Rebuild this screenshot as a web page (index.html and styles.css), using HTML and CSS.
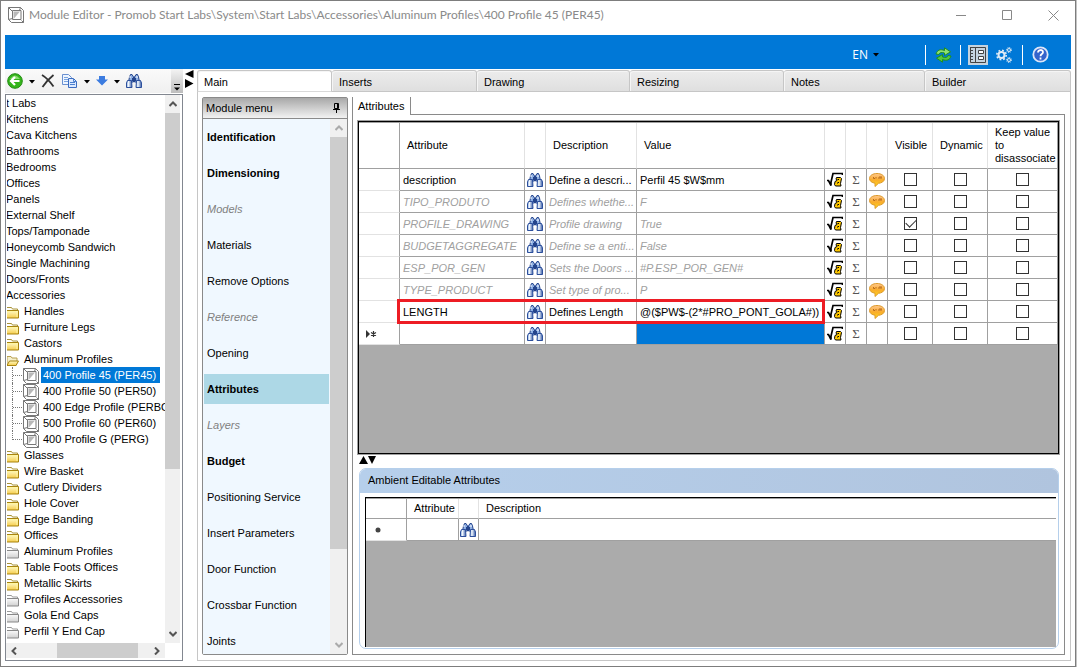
FILE: index.html
```html
<!DOCTYPE html>
<html lang="en">
<head>
    <meta charset="utf-8">
    <title>Module Editor</title>
    <link rel="stylesheet" href="styles.css">
</head>
<body>
    <!-- icon set -->
    <svg class="icon-defs" width="0" height="0" aria-hidden="true">
        <defs>
            <linearGradient id="gBlue" x1="0" x2="1"><stop offset="0" stop-color="#7fa4dc"/><stop offset=".35" stop-color="#f4faff"/><stop offset="1" stop-color="#3458a4"/></linearGradient>
            <linearGradient id="gFolder" x1="0" y1="0" x2="0" y2="1"><stop offset="0" stop-color="#fffbc8"/><stop offset="1" stop-color="#f6cd4c"/></linearGradient>
            <linearGradient id="gGrey" x1="0" y1="0" x2="0" y2="1"><stop offset="0" stop-color="#fafafa"/><stop offset="1" stop-color="#d0d0d0"/></linearGradient>
            <linearGradient id="gBubble" x1="0" y1="0" x2="0" y2="1"><stop offset="0" stop-color="#ffc890"/><stop offset=".5" stop-color="#f9ac2c"/><stop offset="1" stop-color="#ffd81c"/></linearGradient>
            <symbol id="binoculars" viewBox="0 0 16 14">
                <path d="M3.500 3 4.500.500H6L7.500 3v5H2.500z" fill="#8fb0e4" stroke="#24448c"/>
                <path d="M8.500 3 10 .500h1.500l1 2.500 1 5h-5z" fill="#8fb0e4" stroke="#24448c"/>
                <path d="M6 4h4v3H6z" fill="#24448c"/>
                <path d="M1.500 6.500h4l.500 7H.5V9z" fill="url(#gBlue)" stroke="#2c4f9c"/>
                <path d="M10.500 6.500h4l1 2.500v4.500h-5.500z" fill="url(#gBlue)" stroke="#2c4f9c"/>
                <path d="M4 2v2M11 2v2" stroke="#fff"/>
            </symbol>
            <symbol id="formula" viewBox="0 0 16 15">
                <path d="M0 8.500h1.500L4 13.500V10L6 1.500h9.500V3" fill="none" stroke="#000" stroke-width="1.700"/>
                <path d="M9.500 5.500h4l1 1-1 5 .500 2.500H8.500L7.500 12.500l.500-3 2-1L9 7z" fill="#ffc800" stroke="#000"/>
                <path d="M10.500 7.500h1.500M10 11h1l1-1" fill="none" stroke="#000"/>
            </symbol>
            <symbol id="bubble" viewBox="0 0 16 14">
                <path d="M8 .5c4.200 0 7.500 2 7.500 5S12.500 10 9.500 10.300L6 13.500v-3.300C3 9.800.5 8.200.5 5.500c0-3 3.300-5 7.500-5z" fill="url(#gBubble)" stroke="#dc9a2c"/>
                <path d="M4.500 4v1.500H6M7 4v1.500M9 5h4M10 4h3" stroke="#b86a1c" fill="none"/>
            </symbol>
            <symbol id="folder" viewBox="0 0 12 12">
                <path d="M0 .5h4.500l1 1.500h5v2" fill="#fffde0" stroke="#a8923c"/>
                <path d="M0 3.500h11.500v7.500H0" fill="url(#gFolder)" stroke="#a88410"/>
                <path d="M10 4.500v5.500M0 4.500h9" stroke="#fff6a0"/>
            </symbol>
            <symbol id="folder-grey" viewBox="0 0 12 12">
                <path d="M0 .5h4.500l1 1.500h5v2" fill="#fff" stroke="#999"/>
                <path d="M0 3.500h11.500v7.500H0" fill="url(#gGrey)" stroke="#888"/>
            </symbol>
            <symbol id="folder-open" viewBox="0 0 12 12">
                <path d="M0 1.500h4l1 1.500h5v3L9 10.500H0z" fill="#f5efcc" stroke="#b8a050"/>
                <path d="M0 10.500 2.500 6H11.500L9 10.500z" fill="url(#gFolder)" stroke="#a88410"/>
            </symbol>
            <symbol id="module" viewBox="0 0 16 16">
                <path d="M.5.5h12l3 3v12h-12l-3-3zM.5.5l4 4M12.500.5l-1 3M.5 12.500l4-1M15.500 15.500l-2-2" fill="#fff" stroke="#777"/>
                <path d="M4.500 3.500h8.500v9H4.500z" fill="#fff" stroke="#777"/>
                <path d="M5.500 4.500h6.500L5.500 12z" fill="#b8b8b8"/>
            </symbol>
            <symbol id="caret" viewBox="0 0 6 4"><path d="M0 0h6L3 3.500z"/></symbol>
            <symbol id="chevron" viewBox="0 0 8 8"><path d="M.5 6 4 2.500 7.500 6" fill="none" stroke="currentColor" stroke-width="2"/></symbol>
        </defs>
    </svg>

    <div class="window">
        <header class="titlebar">
            <svg class="app-icon" width="16" height="16"><use href="#module"/></svg>
            <span class="title">Module Editor - Promob Start Labs\System\Start Labs\Accessories\Aluminum Profiles\400 Profile 45 (PER45)</span>
            <button class="win-btn" aria-label="Minimize"><svg width="11" height="11"><path d="M0 5.500h10" stroke="#888"/></svg></button>
            <button class="win-btn" aria-label="Maximize"><svg width="11" height="11"><path d="M.5.500h9v9h-9z" fill="none" stroke="#888"/></svg></button>
            <button class="win-btn" aria-label="Close"><svg width="11" height="11"><path d="M.5.500l10 10M10.500.5l-10 10" stroke="#888"/></svg></button>
        </header>

        <div class="ribbon">
            <button class="lang">EN <svg width="6" height="4"><use href="#caret"/></svg></button>
            <span class="divider"></span>
            <button aria-label="Refresh"><svg width="17" height="16" viewBox="0 0 16 16"><path d="M.5 7C1.500 3 5 1.800 9 3.500V.8l6 4-6 3.700V6C6 5 4 5.500 3.500 7.500z" fill="#8fe070" stroke="#209020"/><path d="M15.500 9c-1 4-4.500 5.200-8.500 3.500v2.700l-6-4 6-3.700V10c3 1 5 .5 5.500-1.500z" fill="#54c83c" stroke="#209020"/></svg></button>
            <span class="divider"></span>
            <button class="pressed" aria-label="Properties"><svg width="16" height="16" viewBox="0 0 16 16"><path d="M0 .5h15.500v15H.5V.5M5.500.5v15M1 3.500h2M1 6.500h2M1 9.500h2M1 12.500h2" fill="none" stroke="#444"/><path d="M8.500 3.500h5v3h-5zM8.500 9.500h5v3h-5z" fill="#fff" stroke="#444"/></svg></button>
            <button aria-label="Settings"><svg width="16" height="16" viewBox="0 0 16 16" fill="none" stroke="#e0ebf5"><circle cx="5.500" cy="8" r="3" stroke-width="2"/><circle cx="5.500" cy="8" r="4.700" stroke-width="1.600" stroke-dasharray="1.800 1.890"/><circle cx="13" cy="3" r="1.500"/><circle cx="13" cy="3" r="2.500" stroke-dasharray="1 .96"/><circle cx="13" cy="13" r="1.500"/><circle cx="13" cy="13" r="2.500" stroke-dasharray="1 .96"/></svg></button>
            <span class="divider"></span>
            <button aria-label="Help"><svg width="17" height="17" viewBox="0 0 17 17"><circle cx="8.500" cy="8.500" r="7.200" fill="#3564cc" stroke="#dce6f8" stroke-width="1.800"/><path d="M6 6.500c0-3.300 5-3.200 5-.3 0 2-2.500 1.800-2.500 4M8.500 11.500v2" fill="none" stroke="#fff" stroke-width="1.800"/></svg></button>
        </div>

        <div class="workspace">
            <aside class="sidebar">
                <div class="toolbar">
                    <button aria-label="Back"><svg width="16" height="16" viewBox="0 0 16 16"><circle cx="8" cy="8" r="7.300" fill="#35b51c" stroke="#228c10"/><path d="M3 6Q8-1 13 6z" fill="#8cdc70"/><path d="M12.500 8H4.500M8 4 4 8l4 4" fill="none" stroke="#fff" stroke-width="2.200"/></svg></button>
                    <svg class="drop" width="6" height="4"><use href="#caret"/></svg>
                    <button aria-label="Delete"><svg width="14" height="14" viewBox="0 0 14 14"><path d="M1 1c5 3 8 6.500 11.500 11.500M12.500 1C8 4.500 5 8 1.500 13" fill="none" stroke="#333" stroke-width="1.800"/></svg></button>
                    <button aria-label="Copy"><svg width="16" height="14" viewBox="0 0 16 14"><path d="M.5.500h6l3 3v7h-9z" fill="#eef5ff" stroke="#6a90d0"/><path d="M2 3.500h4M2 5.500h4M2 7.500h4" stroke="#7aa4e0"/><path d="M6.500 4.500h5l3 3v6h-8z" fill="#dceaff" stroke="#3c6cc0"/><path d="M8 8.500h5M8 10.500h5M11.500 5v2.500h3" fill="none" stroke="#4c80d0"/></svg></button>
                    <svg class="drop" width="6" height="4"><use href="#caret"/></svg>
                    <button aria-label="Move down"><svg width="12" height="10" viewBox="0 0 12 10"><path d="M3 0h6v3.500h3L6 9.500 0 3.500h3z" fill="#3c7ce0"/></svg></button>
                    <svg class="drop" width="6" height="4"><use href="#caret"/></svg>
                    <button aria-label="Find"><svg width="16" height="14"><use href="#binoculars"/></svg></button>
                    <span class="overflow"><svg width="6" height="8"><path d="M0 .500h6" stroke="#000"/><path d="M0 3.500h6l-3 3z"/></svg></span>
                </div>
                <div class="tree">
                    <ul class="tree-list">
                        <li class="root">t Labs</li>
                        <li class="root">Kitchens</li>
                        <li class="root">Cava Kitchens</li>
                        <li class="root">Bathrooms</li>
                        <li class="root">Bedrooms</li>
                        <li class="root">Offices</li>
                        <li class="root">Panels</li>
                        <li class="root">External Shelf</li>
                        <li class="root">Tops/Tamponade</li>
                        <li class="root">Honeycomb Sandwich</li>
                        <li class="root">Single Machining</li>
                        <li class="root">Doors/Fronts</li>
                        <li class="root">Accessories</li>
                        <li><svg width="12" height="12"><use href="#folder"/></svg>Handles</li>
                        <li><svg width="12" height="12"><use href="#folder"/></svg>Furniture Legs</li>
                        <li><svg width="12" height="12"><use href="#folder"/></svg>Castors</li>
                        <li><svg width="12" height="12"><use href="#folder-open"/></svg>Aluminum Profiles</li>
                        <li class="leaf"><svg width="16" height="16"><use href="#module"/></svg><span class="selected">400 Profile 45 (PER45)</span></li>
                        <li class="leaf"><svg width="16" height="16"><use href="#module"/></svg><span>400 Profile 50 (PER50)</span></li>
                        <li class="leaf"><svg width="16" height="16"><use href="#module"/></svg><span>400 Edge Profile (PERBO</span></li>
                        <li class="leaf"><svg width="16" height="16"><use href="#module"/></svg><span>500 Profile 60 (PER60)</span></li>
                        <li class="leaf last"><svg width="16" height="16"><use href="#module"/></svg><span>400 Profile G (PERG)</span></li>
                        <li><svg width="12" height="12"><use href="#folder"/></svg>Glasses</li>
                        <li><svg width="12" height="12"><use href="#folder"/></svg>Wire Basket</li>
                        <li><svg width="12" height="12"><use href="#folder"/></svg>Cutlery Dividers</li>
                        <li><svg width="12" height="12"><use href="#folder"/></svg>Hole Cover</li>
                        <li><svg width="12" height="12"><use href="#folder"/></svg>Edge Banding</li>
                        <li><svg width="12" height="12"><use href="#folder"/></svg>Offices</li>
                        <li><svg width="12" height="12"><use href="#folder-grey"/></svg>Aluminum Profiles</li>
                        <li><svg width="12" height="12"><use href="#folder"/></svg>Table Foots Offices</li>
                        <li><svg width="12" height="12"><use href="#folder"/></svg>Metallic Skirts</li>
                        <li><svg width="12" height="12"><use href="#folder-grey"/></svg>Profiles Accessories</li>
                        <li><svg width="12" height="12"><use href="#folder-grey"/></svg>Gola End Caps</li>
                        <li><svg width="12" height="12"><use href="#folder-grey"/></svg>Perfil Y End Cap</li>
                    </ul>
                    <div class="scroll-v tree-v">
                        <svg class="up" width="8" height="8"><use href="#chevron"/></svg>
                        <span class="thumb"></span>
                        <svg class="down" width="8" height="8"><use href="#chevron"/></svg>
                    </div>
                    <div class="scroll-h">
                        <svg class="left" width="8" height="8"><use href="#chevron"/></svg>
                        <span class="thumb"></span>
                        <svg class="right" width="8" height="8"><use href="#chevron"/></svg>
                    </div>
                </div>
            </aside>

            <div class="splitter-v">
                <svg width="9" height="18"><path d="M8.500 0v8L0 4zM0 9v9l8.500-4.500z"/></svg>
            </div>

            <main class="editor">
                <nav class="tabs">
                    <a href="#main" class="tab tab-main active">Main</a>
                    <a href="#inserts" class="tab tab-inserts">Inserts</a>
                    <a href="#drawing" class="tab tab-drawing">Drawing</a>
                    <a href="#resizing" class="tab tab-resizing">Resizing</a>
                    <a href="#notes" class="tab tab-notes">Notes</a>
                    <a href="#builder" class="tab tab-builder">Builder</a>
                </nav>
                <div class="tab-body">
                    <section class="module-menu">
                        <h2>Module menu <svg width="9" height="12"><path d="M2.500 1.500h4v5h-4zM1 7.500h7M4.500 8v3M5.500 1.500v5" fill="none" stroke="#000"/></svg></h2>
                        <div class="menu-body">
                            <ul class="menu-list">
                                <li><a href="#" class="strong">Identification</a></li>
                                <li><a href="#" class="strong">Dimensioning</a></li>
                                <li><a href="#" class="muted">Models</a></li>
                                <li><a href="#">Materials</a></li>
                                <li><a href="#">Remove Options</a></li>
                                <li><a href="#" class="muted">Reference</a></li>
                                <li><a href="#">Opening</a></li>
                                <li><a href="#" class="strong current">Attributes</a></li>
                                <li><a href="#" class="muted">Layers</a></li>
                                <li><a href="#" class="strong">Budget</a></li>
                                <li><a href="#">Positioning Service</a></li>
                                <li><a href="#">Insert Parameters</a></li>
                                <li><a href="#">Door Function</a></li>
                                <li><a href="#">Crossbar Function</a></li>
                                <li><a href="#">Joints</a></li>
                            </ul>
                            <div class="scroll-v menu-v">
                                <svg class="up" width="8" height="8"><use href="#chevron"/></svg>
                                <span class="thumb"></span>
                                <svg class="down" width="8" height="8"><use href="#chevron"/></svg>
                            </div>
                        </div>
                    </section>

                    <section class="attributes">
                        <div class="sub-tabs"><a href="#attributes">Attributes</a></div>
                        <div class="panel">
                            <div class="grid-box">
                                <table class="grid">
                                    <colgroup>
                                        <col class="c-head"><col class="c-attr"><col class="c-icon"><col class="c-desc"><col>
                                        <col class="c-icon"><col class="c-icon"><col class="c-icon"><col class="c-vis"><col class="c-dyn"><col class="c-keep">
                                    </colgroup>
                                    <thead>
                                        <tr><th></th><th>Attribute</th><th></th><th>Description</th><th>Value</th><th></th><th></th><th></th><th>Visible</th><th>Dynamic</th><th>Keep value to disassociate</th></tr>
                                    </thead>
                                    <tbody>
                                        <tr>
                                            <td></td><td>description</td>
                                            <td class="icon"><button aria-label="Find"><svg width="16" height="14"><use href="#binoculars"/></svg></button></td>
                                            <td>Define a descri...</td><td>Perfil 45 $W$mm</td>
                                            <td class="icon"><button aria-label="Formula"><svg width="16" height="15"><use href="#formula"/></svg></button></td>
                                            <td class="sigma"><button>Σ</button></td>
                                            <td class="icon"><button aria-label="Comment"><svg width="16" height="14"><use href="#bubble"/></svg></button></td>
                                            <td class="check"><input type="checkbox" aria-label="Visible"></td>
                                            <td class="check"><input type="checkbox" aria-label="Dynamic"></td>
                                            <td class="check"><input type="checkbox" aria-label="Keep value to disassociate"></td>
                                        </tr>
                                        <tr class="inherited">
                                            <td></td><td>TIPO_PRODUTO</td>
                                            <td class="icon"><button aria-label="Find"><svg width="16" height="14"><use href="#binoculars"/></svg></button></td>
                                            <td>Defines whethe...</td><td>F</td>
                                            <td class="icon"><button aria-label="Formula"><svg width="16" height="15"><use href="#formula"/></svg></button></td>
                                            <td class="sigma"><button>Σ</button></td>
                                            <td class="icon"><button aria-label="Comment"><svg width="16" height="14"><use href="#bubble"/></svg></button></td>
                                            <td class="check"><input type="checkbox" aria-label="Visible"></td>
                                            <td class="check"><input type="checkbox" aria-label="Dynamic"></td>
                                            <td class="check"><input type="checkbox" aria-label="Keep value to disassociate"></td>
                                        </tr>
                                        <tr class="inherited">
                                            <td></td><td>PROFILE_DRAWING</td>
                                            <td class="icon"><button aria-label="Find"><svg width="16" height="14"><use href="#binoculars"/></svg></button></td>
                                            <td>Profile drawing</td><td>True</td>
                                            <td class="icon"><button aria-label="Formula"><svg width="16" height="15"><use href="#formula"/></svg></button></td>
                                            <td class="sigma"><button>Σ</button></td>
                                            <td></td>
                                            <td class="check"><input type="checkbox" aria-label="Visible" checked></td>
                                            <td class="check"><input type="checkbox" aria-label="Dynamic"></td>
                                            <td class="check"><input type="checkbox" aria-label="Keep value to disassociate"></td>
                                        </tr>
                                        <tr class="inherited">
                                            <td></td><td>BUDGETAGGREGATE</td>
                                            <td class="icon"><button aria-label="Find"><svg width="16" height="14"><use href="#binoculars"/></svg></button></td>
                                            <td>Define se a enti...</td><td>False</td>
                                            <td class="icon"><button aria-label="Formula"><svg width="16" height="15"><use href="#formula"/></svg></button></td>
                                            <td class="sigma"><button>Σ</button></td>
                                            <td></td>
                                            <td class="check"><input type="checkbox" aria-label="Visible"></td>
                                            <td class="check"><input type="checkbox" aria-label="Dynamic"></td>
                                            <td class="check"><input type="checkbox" aria-label="Keep value to disassociate"></td>
                                        </tr>
                                        <tr class="inherited">
                                            <td></td><td>ESP_POR_GEN</td>
                                            <td class="icon"><button aria-label="Find"><svg width="16" height="14"><use href="#binoculars"/></svg></button></td>
                                            <td>Sets the Doors ...</td><td>#P.ESP_POR_GEN#</td>
                                            <td class="icon"><button aria-label="Formula"><svg width="16" height="15"><use href="#formula"/></svg></button></td>
                                            <td class="sigma"><button>Σ</button></td>
                                            <td></td>
                                            <td class="check"><input type="checkbox" aria-label="Visible"></td>
                                            <td class="check"><input type="checkbox" aria-label="Dynamic"></td>
                                            <td class="check"><input type="checkbox" aria-label="Keep value to disassociate"></td>
                                        </tr>
                                        <tr class="inherited">
                                            <td></td><td>TYPE_PRODUCT</td>
                                            <td class="icon"><button aria-label="Find"><svg width="16" height="14"><use href="#binoculars"/></svg></button></td>
                                            <td>Set type of pro...</td><td>P</td>
                                            <td class="icon"><button aria-label="Formula"><svg width="16" height="15"><use href="#formula"/></svg></button></td>
                                            <td class="sigma"><button>Σ</button></td>
                                            <td class="icon"><button aria-label="Comment"><svg width="16" height="14"><use href="#bubble"/></svg></button></td>
                                            <td class="check"><input type="checkbox" aria-label="Visible"></td>
                                            <td class="check"><input type="checkbox" aria-label="Dynamic"></td>
                                            <td class="check"><input type="checkbox" aria-label="Keep value to disassociate"></td>
                                        </tr>
                                        <tr class="marked">
                                            <td></td><td>LENGTH</td>
                                            <td class="icon"><button aria-label="Find"><svg width="16" height="14"><use href="#binoculars"/></svg></button></td>
                                            <td>Defines Length</td><td>@($PW$-(2*#PRO_PONT_GOLA#))</td>
                                            <td class="icon"><button aria-label="Formula"><svg width="16" height="15"><use href="#formula"/></svg></button></td>
                                            <td class="sigma"><button>Σ</button></td>
                                            <td class="icon"><button aria-label="Comment"><svg width="16" height="14"><use href="#bubble"/></svg></button></td>
                                            <td class="check"><input type="checkbox" aria-label="Visible"></td>
                                            <td class="check"><input type="checkbox" aria-label="Dynamic"></td>
                                            <td class="check"><input type="checkbox" aria-label="Keep value to disassociate"></td>
                                        </tr>
                                        <tr>
                                            <td class="row-mark"><svg width="12" height="8"><path d="M1 0l4 4-4 4z" fill="#333"/><path d="M8.500 1v6M6 2.500l5 3M11 2.500l-5 3" stroke="#333" stroke-width="1.200"/></svg></td><td></td>
                                            <td class="icon"><button aria-label="Find"><svg width="16" height="14"><use href="#binoculars"/></svg></button></td>
                                            <td></td><td class="active-cell"></td>
                                            <td class="icon"><button aria-label="Formula"><svg width="16" height="15"><use href="#formula"/></svg></button></td>
                                            <td class="sigma"><button>Σ</button></td>
                                            <td></td>
                                            <td class="check"><input type="checkbox" aria-label="Visible"></td>
                                            <td class="check"><input type="checkbox" aria-label="Dynamic"></td>
                                            <td class="check"><input type="checkbox" aria-label="Keep value to disassociate"></td>
                                        </tr>
                                    </tbody>
                                </table>
                            </div>
                            <div class="splitter-h">
                                <svg width="18" height="8"><path d="M0 8h9L4.500 0zM9 0h8l-4 8z"/></svg>
                            </div>
                            <div class="group">
                                <h3>Ambient Editable Attributes</h3>
                                <div class="group-body">
                                    <table class="grid small">
                                        <colgroup><col class="s-head"><col class="s-attr"><col class="s-icon"><col></colgroup>
                                        <thead>
                                            <tr><th></th><th>Attribute</th><th></th><th>Description</th></tr>
                                        </thead>
                                        <tbody>
                                            <tr>
                                                <td class="row-mark"><svg width="12" height="8"><circle cx="6" cy="4" r="2.500" fill="#444"/></svg></td><td></td>
                                                <td class="icon"><button aria-label="Find"><svg width="16" height="14"><use href="#binoculars"/></svg></button></td>
                                                <td></td>
                                            </tr>
                                        </tbody>
                                    </table>
                                </div>
                            </div>
                        </div>
                    </section>
                </div>
            </main>
        </div>
    </div>
</body>
</html>
```
FILE: styles.css
```css
* {
    box-sizing: border-box;
}
body {
    margin: 0;
    background: #c4c4c4;
    font-family: "Liberation Sans", Arial, sans-serif;
    font-size: 11px;
    line-height: 16px;
    color: #000;
}
svg {
    display: block;
    flex: none;
}
.icon-defs {
    position: absolute;
}
button {
    display: flex;
    align-items: center;
    justify-content: center;
    padding: 0;
    border: 0;
    background: none;
    font: inherit;
    color: inherit;
}
a {
    color: inherit;
    text-decoration: none;
}
ul {
    list-style: none;
    margin: 0;
    padding: 0;
}
h2, h3 {
    margin: 0;
    font-size: 11px;
    font-weight: normal;
}

/* window frame */
.window {
    display: flex;
    flex-direction: column;
    height: 100vh;
    margin-right: 1px;
    border: 1px solid #7d7d7d;
    background: #fff;
}
.titlebar {
    display: flex;
    align-items: center;
    height: 34px;
    padding: 0 16px 6px 7px;
}
.title {
    flex: 1;
    margin-left: 5px;
    font-family: Lato, "Segoe UI", sans-serif;
    font-size: 12px;
    color: #8a8a8a;
    white-space: nowrap;
}
.win-btn {
    margin-left: 35px;
}
.ribbon {
    display: flex;
    flex: none;
    align-items: center;
    justify-content: flex-end;
    gap: 8px;
    height: 34px;
    margin: 0 4px;
    padding: 5px 22px 0 0;
    background: #0078d7;
}
.ribbon .lang {
    gap: 5px;
    margin-right: 38px;
    color: #fff;
    font-family: "Open Sans", sans-serif;
    font-size: 12px;
}
.lang svg {
    fill: #000;
}
.ribbon .divider {
    width: 1px;
    height: 20px;
    background: #fff;
}
.ribbon .divider + button {
    margin-left: 1px;
}
.ribbon .divider + .pressed {
    width: 20px;
    height: 20px;
    margin-left: -1px;
    background: #c5d3df;
}
.ribbon .pressed + button {
    margin-right: 2px;
}

.workspace {
    display: flex;
    flex: 1;
    min-height: 0;
    padding: 0 4px 5px;
}

/* left tree */
.sidebar {
    display: flex;
    flex-direction: column;
    width: 178px;
}
.toolbar {
    display: flex;
    align-items: center;
    height: 24px;
    padding-left: 2px;
    background: linear-gradient(#fafafa, #f0f0f0);
}
.toolbar .drop {
    margin: 2px 6px 0;
}
.toolbar button + button {
    margin-left: 7px;
}
.toolbar .overflow {
    align-self: stretch;
    display: flex;
    align-items: flex-end;
    justify-content: center;
    width: 12px;
    margin-left: auto;
    padding-bottom: 1px;
    background: linear-gradient(#f4f4f4, #bdbdbd);
}
.tree {
    flex: 1;
    min-height: 0;
    display: grid;
    grid-template-columns: 1fr 15px;
    grid-template-rows: 1fr 15px;
    margin-top: 1px;
    padding: 0 2px 2px 0;
    border: 1px solid #828790;
}
.tree-list {
    min-width: 0;
    overflow: hidden;
    margin-left: 1px;
}
.tree-list li {
    display: flex;
    align-items: center;
    height: 16px;
    gap: 5px;
    white-space: nowrap;
}
.tree-list .root {
    text-indent: -1px;
}
.tree-list li > svg {
    margin-top: 3px;
}
.tree-list .leaf {
    position: relative;
    gap: 2px;
    padding-left: 16px;
}
.leaf::before {
    content: "";
    position: absolute;
    left: 5px;
    top: 0;
    width: 10px;
    height: 16px;
    border-left: 1px dotted #777;
    background: repeating-linear-gradient(90deg, #777 0 1px, transparent 1px 2px) 0 8px / 10px 1px no-repeat;
}
.leaf.last::before {
    height: 9px;
}
.tree-list .leaf svg {
    margin-top: 2px;
}
.leaf span {
    padding: 0 2px;
}
.leaf .selected {
    padding-right: 4px;
    background: #0078d7;
    color: #fff;
}

/* scroll bars */
.scroll-v, .scroll-h {
    display: flex;
    background: #f0f0f0;
    color: #555;
}
.scroll-v {
    flex-direction: column;
    align-items: center;
}
.scroll-v .thumb {
    width: 100%;
    background: #cdcdcd;
}
.scroll-v .up, .scroll-v .down {
    margin: 5px 0;
}
.scroll-v .down {
    margin-top: auto;
    transform: rotate(180deg);
}
.tree-v .thumb {
    height: 65%;
}
.scroll-h {
    grid-column: 1 / 2;
    align-items: center;
    padding: 0 4px;
}
.scroll-h .thumb {
    width: 81px;
    height: 100%;
    margin-left: 39px;
    background: #cdcdcd;
}
.scroll-h .left {
    transform: rotate(-90deg);
}
.scroll-h .right {
    margin-left: auto;
    transform: rotate(90deg);
}
.splitter-v {
    width: 14px;
    padding: 1px 0 0 2px;
}

/* main tabs */
.editor {
    flex: 1;
    display: flex;
    flex-direction: column;
    min-width: 0;
}
.tabs {
    display: flex;
    height: 23px;
    padding-top: 1px;
}
.tab {
    padding: 3px 7px 0;
    border: 1px solid #c6c6c6;
    border-left: 0;
    border-radius: 3px 3px 0 0;
    background: linear-gradient(#ececec, #dfdfdf);
    box-shadow: inset 1px 1px 0 #f5f5f5;
}
.tab.active {
    padding-left: 6px;
    border-left: 1px solid #c6c6c6;
    border-bottom-color: #d9d9d9;
    background: #fff;
}
.tab-main { width: 135px; }
.tab-inserts { width: 145px; }
.tab-drawing { width: 153px; }
.tab-resizing { width: 154px; }
.tab-notes { width: 141px; }
.tab-builder { flex: 1; }
.tab-body {
    flex: 1;
    display: flex;
    gap: 4px;
    min-height: 0;
    padding: 5px 5px 5px 4px;
    border: 1px solid #c6c6c6;
    border-top: 0;
}

/* module menu */
.module-menu {
    display: flex;
    flex-direction: column;
    width: 146px;
    border: 1px solid #8a8a8a;
    border-radius: 2px;
}
.module-menu h2 {
    display: flex;
    align-items: center;
    justify-content: space-between;
    height: 21px;
    padding: 0 6px 0 3px;
    border-bottom: 1px solid #8a8a8a;
    background: linear-gradient(#a8a8a8, #f2f2f2);
}
.menu-body {
    flex: 1;
    display: flex;
    min-height: 0;
    background: #f0f8ff;
}
.menu-list {
    flex: 1;
    overflow: hidden;
    padding: 0 1px;
}
.menu-list a {
    display: block;
    height: 30px;
    margin: 3px 0 6px;
    padding: 7px 3px;
    white-space: nowrap;
}
.menu-list .strong {
    font-weight: bold;
}
.menu-list .muted {
    font-style: italic;
    color: #808080;
}
.menu-list .current {
    background: #add8e6;
}
.menu-v {
    width: 17px;
    color: #aaa;
}
.menu-v .thumb {
    height: 77%;
}

/* attributes */
.attributes {
    flex: 1;
    display: flex;
    flex-direction: column;
    min-width: 0;
}
.sub-tabs {
    display: flex;
    height: 18px;
    border-left: 1px solid #8a8a8a;
}
.sub-tabs::after {
    content: "";
    flex: 1;
    border-bottom: 1px solid #8a8a8a;
}
.sub-tabs a {
    width: 58px;
    padding: 1px 5px 0;
    border-right: 1px solid #8a8a8a;
}
.panel {
    flex: 1;
    display: flex;
    flex-direction: column;
    min-height: 0;
    padding: 6px 5px 5px;
    border: 1px solid #8a8a8a;
    border-top: 0;
}
.grid-box {
    flex: 1;
    min-height: 0;
    border: 1px solid #000;
    background: #ababab;
    outline: 1px solid #a0a0a0;
}
.grid {
    width: 100%;
    table-layout: fixed;
    border-collapse: separate;
    border-spacing: 0;
    border-top: 1px solid #a0a0a0;
    background: #fff;
}
.grid th {
    height: 46px;
    padding: 0 0 0 7px;
    border-right: 1px solid #e2e2e2;
    border-bottom: 1px solid #a0a0a0;
    font-weight: normal;
    line-height: 13px;
    text-align: left;
}
.grid th:first-child, .grid th:last-child {
    border-right-color: #a0a0a0;
}
.grid td {
    height: 22px;
    padding: 0 0 0 3px;
    border-right: 1px solid #a0a0a0;
    border-bottom: 1px solid #a0a0a0;
    overflow: hidden;
    text-overflow: ellipsis;
    white-space: nowrap;
}
.grid td:first-child {
    border-bottom-color: #e2e2e2;
}
.c-head { width: 41px; }
.c-attr { width: 125px; }
.c-icon { width: 21px; }
.c-desc { width: 91px; }
.c-vis { width: 45px; }
.c-dyn { width: 55px; }
.c-keep { width: 70px; }
.grid td.icon {
    padding: 0 2px;
}
.grid td.sigma {
    padding: 0;
    color: #555;
    font-family: "Liberation Serif", serif;
    font-size: 13px;
    font-style: normal;
}
.sigma button {
    width: 100%;
}
.grid td.check {
    padding: 0;
    text-align: center;
}
.grid td.row-mark {
    padding-left: 6px;
}
.inherited {
    font-style: italic;
    color: #a0a0a0;
}
.grid td.active-cell {
    background: #0078d7;
}
input[type="checkbox"] {
    appearance: none;
    display: block;
    width: 13px;
    height: 13px;
    margin: 0 auto;
    border: 1px solid #333;
    background: #fff;
}
input[type="checkbox"]:checked::before {
    content: "";
    display: block;
    width: 9px;
    height: 5px;
    margin: 1px;
    border: solid #333;
    border-width: 0 0 1px 1px;
    transform: rotate(-45deg);
}
/* red frame round the row being explained */
.marked {
    position: relative;
}
.marked td:first-child::after {
    content: "";
    position: absolute;
    left: 38px;
    right: 233px;
    top: -2px;
    bottom: -1px;
    border: 3px solid #ed1c24;
}
.splitter-h {
    height: 14px;
    padding: 2px 1px;
}
.group {
    display: flex;
    flex-direction: column;
    height: 181px;
    border: 1px solid #b5cfeb;
    border-radius: 7px;
    margin-left: 1px;
    overflow: hidden;
}
.group h3 {
    height: 24px;
    padding: 3px 8px;
    background: linear-gradient(90deg, #b6cfeb, #b0c4de);
}
.group-body {
    flex: 1;
    margin: 4px 2px 1px 5px;
    border: solid #000;
    border-width: 1px 0 0 1px;
    background: #ababab;
}
.s-head { width: 41px; }
.s-attr { width: 52px; }
.s-icon { width: 20px; }
.small th {
    height: 20px;
}
.small th:last-child, .small td:last-child {
    border-right: 0;
}
.grid.small td.icon {
    padding: 0 1px;
}
```
